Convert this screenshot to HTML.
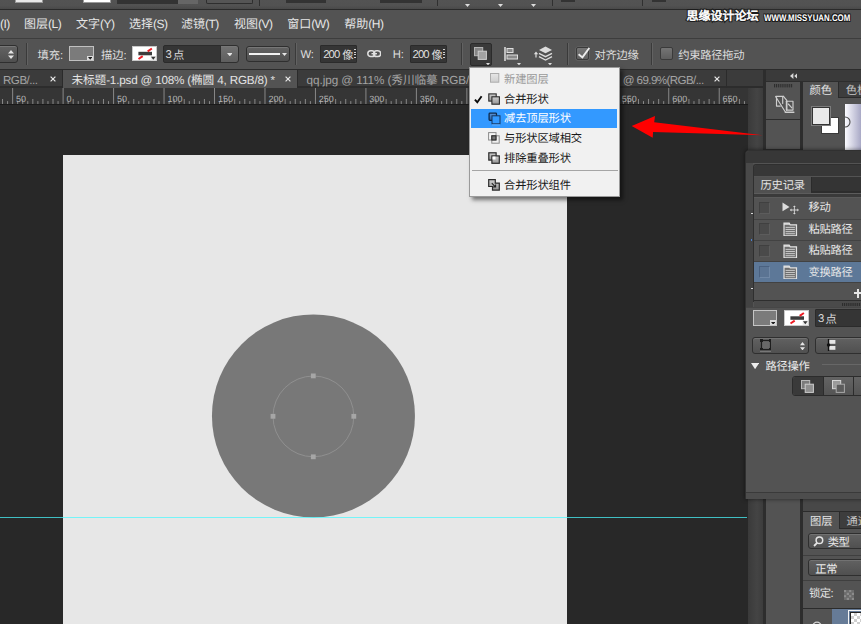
<!DOCTYPE html>
<html lang="zh"><head><meta charset="utf-8"><title>Photoshop</title>
<style>
html,body{margin:0;padding:0}
body{width:861px;height:624px;overflow:hidden;position:relative;background:#282828;font-family:"Liberation Sans","Noto Sans CJK SC",sans-serif;font-size:11.3px;color:#dcdcdc;text-rendering:geometricPrecision;-webkit-font-smoothing:antialiased}
.a{position:absolute;box-sizing:border-box}
.t{position:absolute;white-space:nowrap}
.k{font-family:"Liberation Sans","Noto Sans CJK SC",sans-serif}
.wmo .k{-webkit-text-stroke:2.7px #1c1c1c;paint-order:stroke fill}
.wmi .k{-webkit-text-stroke:0.6px #ffffff}
</style></head>
<body>
<div class="a" style="left:0px;top:105px;width:748px;height:519px;background:#282828;"></div>
<div class="a" style="left:62.7px;top:154.9px;width:504.5px;height:470px;background:#e7e7e7;"></div>
<svg class="a" style="left:200px;top:300px;" width="230" height="230" viewBox="0 0 230 230"><circle cx="113.45" cy="115.9" r="101.5" fill="#787878"/><circle cx="113.4" cy="116.4" r="40.4" fill="none" stroke="#949494" stroke-width="0.85"/><g fill="#a6a6a6"><rect x="110.9" y="73.5" width="4.8" height="4.8"/><rect x="110.9" y="154.4" width="4.8" height="4.8"/><rect x="70.6" y="113.9" width="4.8" height="4.8"/><rect x="151.4" y="113.9" width="4.8" height="4.8"/></g></svg>
<div class="a" style="left:0px;top:516.5px;width:747.3px;height:1.5px;background:rgba(74,250,255,.72);"></div>
<div class="a" style="left:0px;top:0px;width:861px;height:10px;background:#525252;background:linear-gradient(#535353 0,#525252 55%,#474747 100%);"></div>
<div class="a" style="left:15px;top:0px;width:28px;height:3px;background:#e9e9e9;border:1px solid #999;border-top:0"></div>
<div class="a" style="left:83px;top:0px;width:28px;height:3px;background:#ffffff;border:1px solid #999;border-top:0"></div>
<div class="a" style="left:117px;top:0px;width:81px;height:3.5px;background:#333;"></div>
<div class="a" style="left:178px;top:0px;width:20px;height:3.5px;background:#666;"></div>
<div class="a" style="left:205.5px;top:0px;width:47px;height:3.5px;background:#555;border:1px solid #2e2e2e;border-top:0;border-radius:0 0 2px 2px"></div>
<div class="a" style="left:259px;top:0px;width:1.2px;height:5.8px;background:#303030;"></div>
<div class="a" style="left:286px;top:0px;width:40px;height:3px;background:#333;"></div>
<div class="a" style="left:380px;top:0px;width:42px;height:3px;background:#333;"></div>
<div class="a" style="left:437px;top:0px;width:1.2px;height:5.8px;background:#303030;"></div>
<svg class="a" style="left:464.5px;top:4px;" width="5" height="3" viewBox="0 0 5 3"><path d="M0 0h5L2.5 3z" fill="#ddd"/></svg>
<svg class="a" style="left:497.5px;top:4px;" width="5" height="3" viewBox="0 0 5 3"><path d="M0 0h5L2.5 3z" fill="#ddd"/></svg>
<svg class="a" style="left:530.5px;top:4px;" width="5" height="3" viewBox="0 0 5 3"><path d="M0 0h5L2.5 3z" fill="#ddd"/></svg>
<div class="a" style="left:552px;top:0px;width:1.2px;height:5.8px;background:#303030;"></div>
<div class="a" style="left:561px;top:0px;width:14px;height:1.5px;background:#333;"></div>
<div class="a" style="left:642px;top:0px;width:1.2px;height:5.8px;background:#303030;"></div>
<div class="a" style="left:652px;top:0px;width:14px;height:1.5px;background:#333;"></div>
<div class="a" style="left:0px;top:8.9px;width:861px;height:1.5px;background:#2a2a2a;"></div>
<div class="a" style="left:0px;top:10.4px;width:861px;height:27.6px;background:#535353;"></div>
<div class="t " style="left:0px;top:16.44px;font-size:12px;line-height:16px;color:#e6e6e6;"><span style="letter-spacing:-0.5px;">(I)</span></div>
<div class="t " style="left:24px;top:16.44px;font-size:12px;line-height:16px;color:#e6e6e6;"><span class="k">图层</span><span style="letter-spacing:-0.5px;">(L)</span></div>
<div class="t " style="left:76px;top:16.44px;font-size:12px;line-height:16px;color:#e6e6e6;"><span class="k">文字</span><span style="letter-spacing:-0.5px;">(Y)</span></div>
<div class="t " style="left:129px;top:16.44px;font-size:12px;line-height:16px;color:#e6e6e6;"><span class="k">选择</span><span style="letter-spacing:-0.5px;">(S)</span></div>
<div class="t " style="left:181px;top:16.44px;font-size:12px;line-height:16px;color:#e6e6e6;"><span class="k">滤镜</span><span style="letter-spacing:-0.5px;">(T)</span></div>
<div class="t " style="left:234px;top:16.44px;font-size:12px;line-height:16px;color:#e6e6e6;"><span class="k">视图</span><span style="letter-spacing:-0.5px;">(V)</span></div>
<div class="t " style="left:287.3px;top:16.44px;font-size:12px;line-height:16px;color:#e6e6e6;"><span class="k">窗口</span><span style="letter-spacing:-0.5px;">(W)</span></div>
<div class="t " style="left:344.3px;top:16.44px;font-size:12px;line-height:16px;color:#e6e6e6;"><span class="k">帮助</span><span style="letter-spacing:-0.5px;">(H)</span></div>
<div class="t wmo" style="left:686.6px;top:8.34px;font-size:12px;line-height:16px;color:#1c1c1c;"><span class="k">思缘设计论坛</span></div>
<div class="t wmi" style="left:686.6px;top:8.34px;font-size:12px;line-height:16px;color:#ffffff;"><span class="k">思缘设计论坛</span></div>
<div class="t " style="left:764.3px;top:11.15px;font-size:9.6px;line-height:16px;color:#fff;font-weight:bold;text-shadow:1px 0 0 #1c1c1c,-1px 0 0 #1c1c1c,0 1px 0 #1c1c1c,0 -1px 0 #1c1c1c,1px 1px 0 #1c1c1c,-1px -1px 0 #1c1c1c,1px -1px 0 #1c1c1c,-1px 1px 0 #1c1c1c;transform-origin:0 50%;transform:scaleX(0.822);">WWW.MISSYUAN.COM</div>
<div class="a" style="left:0px;top:37.7px;width:861px;height:1.4px;background:#3d3d3d;"></div>
<div class="a" style="left:0px;top:39.1px;width:861px;height:29.9px;background:#535353;"></div>
<div class="a" style="left:0px;top:69px;width:861px;height:1px;background:#2b2b2b;"></div>
<div class="a" style="left:-4px;top:45px;width:21.5px;height:17.5px;background:linear-gradient(#636363,#4f4f4f);border:1px solid #2f2f2f;border-radius:3px;box-shadow:inset 0 1px 0 #777;"></div>
<svg class="a" style="left:7.5px;top:49.5px;" width="6" height="9" viewBox="0 0 6 9"><path d="M0 3.5L3 0l3 3.5zM0 5.5h6L3 9z" fill="#e6e6e6"/></svg>
<div class="a" style="left:26px;top:43px;width:1px;height:22px;background:#3a3a3a;"></div><div class="a" style="left:27px;top:43px;width:1px;height:22px;background:#626262;"></div>
<div class="t " style="left:37.5px;top:47.98px;font-size:11.3px;line-height:16px;color:#dedede;"><span class="k">填充</span>:</div>
<div class="a" style="left:68.7px;top:46px;width:24.9px;height:15.2px;background:#7b7b7b;border:1.2px solid #c0c0c0;"></div>
<div class="a" style="left:87px;top:56.3px;width:5.6px;height:4.2px;background:#dcdcdc;"></div>
<svg class="a" style="left:87.6px;top:57.3px;" width="4.4" height="2.7" viewBox="0 0 4.4 2.7"><path d="M0 0h4.4L2.2 2.7z" fill="#1e1e1e"/></svg>
<div class="t " style="left:101px;top:47.98px;font-size:11.3px;line-height:16px;color:#dedede;"><span class="k">描边</span>:</div>
<div class="a" style="left:131.6px;top:46px;width:25.1px;height:15.4px;background:#ffffff;border:1px solid #c8c8c8;"></div><svg class="a" style="left:131.6px;top:46px;" width="24.8" height="15.4" viewBox="0 0 24.8 15"><rect x="6.4" y="5.6" width="13.6" height="3.5" fill="#3c3c3c"/><path d="M15.7 5.2L19.9 2.3" stroke="#ee1c24" stroke-width="2"/><path d="M6.5 12.8L10.7 10" stroke="#ee1c24" stroke-width="2"/><rect x="18.6" y="9.8" width="5.4" height="4.4" fill="#e8e8e8"/><path d="M19 10.6h4.6L21.3 13.6z" fill="#333"/></svg>
<div class="a" style="left:162.5px;top:45px;width:58px;height:17.5px;background:#353535;border:1px solid #2b2b2b;border-radius:1px;border-radius:2px 0 0 2px;"></div>
<div class="t " style="left:165.6px;top:47.98px;font-size:11.3px;line-height:16px;color:#dedede;"><span style="letter-spacing:-1px;position:relative;top:-0.9px;">3 </span><span class="k">点</span></div>
<div class="a" style="left:220px;top:45px;width:18.5px;height:17.5px;background:linear-gradient(#636363,#4f4f4f);border:1px solid #2f2f2f;border-radius:3px;box-shadow:inset 0 1px 0 #777;border-radius:0 3px 3px 0;background:linear-gradient(#727272,#5e5e5e);"></div>
<svg class="a" style="left:226.5px;top:52.5px;" width="5.6" height="3.4" viewBox="0 0 5.6 3.4"><path d="M0 0h5.6L2.8 3.4z" fill="#e6e6e6"/></svg>
<div class="a" style="left:245.5px;top:45.5px;width:44px;height:16px;background:linear-gradient(#636363,#4f4f4f);border:1px solid #2f2f2f;border-radius:3px;box-shadow:inset 0 1px 0 #777;"></div>
<div class="a" style="left:249px;top:53.4px;width:31px;height:1.6px;background:#f2f2f2;"></div>
<svg class="a" style="left:281.5px;top:52.8px;" width="5" height="3" viewBox="0 0 5 3"><path d="M0 0h5L2.5 3z" fill="#e6e6e6"/></svg>
<div class="a" style="left:294.5px;top:43px;width:1px;height:22px;background:#3a3a3a;"></div><div class="a" style="left:295.5px;top:43px;width:1px;height:22px;background:#626262;"></div>
<div class="t " style="left:300.4px;top:46.88px;font-size:11.3px;line-height:16px;color:#dedede;">W:</div>
<div class="a" style="left:320px;top:45px;width:37px;height:17.5px;background:#353535;border:1px solid #2b2b2b;border-radius:1px;"></div>
<div class="t " style="left:323.2px;top:46.98px;font-size:11.3px;line-height:16px;color:#dedede;"><span style="letter-spacing:-0.9px;">200</span></div>
<div class="t " style="left:342.3px;top:47.98px;font-size:11.3px;line-height:16px;color:#dedede;"><span class="k">像</span></div>
<div class="a" style="left:353.7px;top:49px;width:2px;height:9px;background:repeating-linear-gradient(#cfcfcf 0 1.2px,#333 1.2px 2.6px);"></div>
<svg class="a" style="left:366.5px;top:50.3px;" width="14.5" height="7.4" viewBox="0 0 14.5 7.4"><g fill="none" stroke="#e0e0e0" stroke-width="1.5"><rect x="0.8" y="0.8" width="7" height="5.8" rx="2.9"/><rect x="6.7" y="0.8" width="7" height="5.8" rx="2.9"/></g><path d="M4.5 3.7h5.5" stroke="#e0e0e0" stroke-width="1.4"/></svg>
<div class="t " style="left:392.7px;top:46.88px;font-size:11.3px;line-height:16px;color:#dedede;">H:</div>
<div class="a" style="left:409.5px;top:45px;width:37px;height:17.5px;background:#353535;border:1px solid #2b2b2b;border-radius:1px;"></div>
<div class="t " style="left:412.5px;top:46.98px;font-size:11.3px;line-height:16px;color:#dedede;"><span style="letter-spacing:-0.9px;">200</span></div>
<div class="t " style="left:431.6px;top:47.98px;font-size:11.3px;line-height:16px;color:#dedede;"><span class="k">像</span></div>
<div class="a" style="left:443.2px;top:49px;width:2px;height:9px;background:repeating-linear-gradient(#cfcfcf 0 1.2px,#333 1.2px 2.6px);"></div>
<div class="a" style="left:460.5px;top:43px;width:1px;height:22px;background:#3a3a3a;"></div><div class="a" style="left:461.5px;top:43px;width:1px;height:22px;background:#626262;"></div>
<div class="a" style="left:470px;top:42.6px;width:21.8px;height:23.2px;background:#3a3a3a;border:1px solid #2b2b2b;border-radius:2px;"></div>
<svg class="a" style="left:474px;top:47px;" width="13" height="13" viewBox="0 0 13 13"><rect x="0.5" y="0.5" width="8.2" height="8.2" fill="#858585" stroke="#b4b4b4" stroke-width="1"/><rect x="4.2" y="4.2" width="8.2" height="8.2" fill="#a2a2a2" stroke="#cdcdcd" stroke-width="1"/></svg>
<svg class="a" style="left:486.3px;top:62.7px;" width="4" height="2.4" viewBox="0 0 4 2.4"><path d="M0 0h4L2 2.4z" fill="#ddd"/></svg>
<svg class="a" style="left:504px;top:47px;" width="15" height="14" viewBox="0 0 15 14"><path d="M1 0v14" stroke="#e0e0e0" stroke-width="1.5"/><rect x="3" y="1.5" width="6" height="4" fill="#8a8a8a" stroke="#e0e0e0" stroke-width="1"/><rect x="3" y="8" width="10.5" height="4" fill="#8a8a8a" stroke="#e0e0e0" stroke-width="1"/></svg>
<svg class="a" style="left:517.3px;top:62.7px;" width="4" height="2.4" viewBox="0 0 4 2.4"><path d="M0 0h4L2 2.4z" fill="#ddd"/></svg>
<svg class="a" style="left:532.5px;top:45.5px;" width="20" height="16" viewBox="0 0 20 16"><path d="M3 7.6v4" fill="none" stroke="#e0e0e0" stroke-width="1.2"/><path d="M0.8 8.2L3 5.4l2.2 2.8z" fill="#e0e0e0"/><path d="M12.5 0.5l6.5 3.4-6.5 3.4L6 3.9z" fill="#ddd"/><path d="M6 7.3l6.5 3.4L19 7.3M6 10.6l6.5 3.4 6.5-3.4" fill="none" stroke="#ddd" stroke-width="1.3"/></svg>
<svg class="a" style="left:548.2px;top:62.7px;" width="4" height="2.4" viewBox="0 0 4 2.4"><path d="M0 0h4L2 2.4z" fill="#ddd"/></svg>
<div class="a" style="left:567px;top:43px;width:1px;height:22px;background:#3a3a3a;"></div><div class="a" style="left:568px;top:43px;width:1px;height:22px;background:#626262;"></div>
<div class="a" style="left:576.3px;top:47px;width:13.2px;height:13.2px;background:#6c6c6c;border:1px solid #3a3a3a;border-radius:2px;background:linear-gradient(#767676,#606060);box-shadow:0 0 0 0.6px #6a6a6a;"></div>
<svg class="a" style="left:577px;top:45.5px;" width="14" height="14" viewBox="0 0 14 14"><path d="M1.6 8.2L5.4 11.4 12.3 2" fill="none" stroke="#ececec" stroke-width="1.9"/></svg>
<div class="t " style="left:594.4px;top:47.98px;font-size:11.3px;line-height:16px;color:#dedede;"><span class="k" style="letter-spacing:-0.3px;">对齐边缘</span></div>
<div class="a" style="left:650.5px;top:43px;width:1px;height:22px;background:#3a3a3a;"></div><div class="a" style="left:651.5px;top:43px;width:1px;height:22px;background:#626262;"></div>
<div class="a" style="left:660px;top:47px;width:13px;height:13.2px;background:#686868;border:1px solid #3a3a3a;border-radius:2px;background:linear-gradient(#747474,#5e5e5e);"></div>
<div class="t " style="left:678.2px;top:47.98px;font-size:11.3px;line-height:16px;color:#dedede;"><span class="k" style="letter-spacing:-0.26px;">约束路径拖动</span></div>
<div class="a" style="left:0px;top:70px;width:762.5px;height:18.3px;background:#3b3b3b;"></div>
<div class="a" style="left:63px;top:70px;width:234px;height:18.3px;background:#535353;"></div>
<div class="a" style="left:0px;top:86.3px;width:63px;height:1.7px;background:#2c2c2c;"></div>
<div class="a" style="left:297px;top:86.3px;width:465.5px;height:1.7px;background:#2c2c2c;"></div>
<div class="a" style="left:62px;top:70px;width:1px;height:18.3px;background:#2b2b2b;"></div>
<div class="a" style="left:297px;top:70px;width:1px;height:18.3px;background:#2b2b2b;"></div>
<div class="t " style="left:3px;top:72.99px;font-size:11.6px;line-height:16px;color:#a4a4a4;"><span style="letter-spacing:-0.5px;">RGB/...</span></div>
<svg class="a" style="left:49.8px;top:76.4px;" width="6" height="6" viewBox="0 0 6 6"><path d="M0.6 0.6L5.4 5.4M5.4 0.6L0.6 5.4" stroke="#e8e8e8" stroke-width="1.2"/></svg>
<div class="t " style="left:71.4px;top:73.03px;font-size:11.7px;line-height:16px;color:#e4e4e4;"><span class="k" style="letter-spacing:-0.1px;">未标题</span><span style="letter-spacing:-0.2px;">-1.psd @ 108% (</span><span class="k" style="letter-spacing:-0.1px;">椭圆</span><span style="letter-spacing:-0.2px;"> 4, RGB/8) *</span></div>
<svg class="a" style="left:285px;top:76.4px;" width="6" height="6" viewBox="0 0 6 6"><path d="M0.6 0.6L5.4 5.4M5.4 0.6L0.6 5.4" stroke="#e8e8e8" stroke-width="1.2"/></svg>
<div class="t " style="left:306.6px;top:73.03px;font-size:11.7px;line-height:16px;color:#a4a4a4;"><span style="letter-spacing:-0.05px;">qq.jpg @ 111% (</span><span class="k" style="letter-spacing:-0.1px;">秀川临摹</span><span style="letter-spacing:-0.05px;"> RGB/</span></div>
<div class="t " style="left:622.8px;top:72.99px;font-size:11.6px;line-height:16px;color:#a4a4a4;"><span style="letter-spacing:-0.6px;">@ 69.9%(RGB/...</span></div>
<svg class="a" style="left:713.8px;top:76.4px;" width="6" height="6" viewBox="0 0 6 6"><path d="M0.6 0.6L5.4 5.4M5.4 0.6L0.6 5.4" stroke="#e8e8e8" stroke-width="1.2"/></svg>
<div class="a" style="left:726px;top:70px;width:1px;height:18.3px;background:#2b2b2b;"></div>
<div class="a" style="left:0px;top:88px;width:748px;height:16.2px;background:#353535;"></div>
<div class="a" style="left:0px;top:103.7px;width:748px;height:1.7px;background:#1a1a1a;"></div>
<svg class="a" style="left:0px;top:88px;" width="748" height="16" viewBox="0 0 748 16"><rect x="-38.34" y="0" width="1" height="16" fill="#888888"/><rect x="-33.29" y="13.1" width="1" height="2.9" fill="#888888"/><rect x="-28.25" y="11" width="1" height="5" fill="#888888"/><rect x="-23.20" y="13.1" width="1" height="2.9" fill="#888888"/><rect x="-18.15" y="11" width="1" height="5" fill="#888888"/><rect x="-13.10" y="13.1" width="1" height="2.9" fill="#888888"/><rect x="-8.06" y="11" width="1" height="5" fill="#888888"/><rect x="-3.01" y="13.1" width="1" height="2.9" fill="#888888"/><rect x="2.04" y="11" width="1" height="5" fill="#888888"/><rect x="7.08" y="13.1" width="1" height="2.9" fill="#888888"/><rect x="12.13" y="0" width="1" height="16" fill="#888888"/><rect x="17.18" y="13.1" width="1" height="2.9" fill="#888888"/><rect x="22.22" y="11" width="1" height="5" fill="#888888"/><rect x="27.27" y="13.1" width="1" height="2.9" fill="#888888"/><rect x="32.32" y="11" width="1" height="5" fill="#888888"/><rect x="37.37" y="13.1" width="1" height="2.9" fill="#888888"/><rect x="42.41" y="11" width="1" height="5" fill="#888888"/><rect x="47.46" y="13.1" width="1" height="2.9" fill="#888888"/><rect x="52.51" y="11" width="1" height="5" fill="#888888"/><rect x="57.55" y="13.1" width="1" height="2.9" fill="#888888"/><rect x="62.60" y="0" width="1" height="16" fill="#888888"/><rect x="67.65" y="13.1" width="1" height="2.9" fill="#888888"/><rect x="72.69" y="11" width="1" height="5" fill="#888888"/><rect x="77.74" y="13.1" width="1" height="2.9" fill="#888888"/><rect x="82.79" y="11" width="1" height="5" fill="#888888"/><rect x="87.84" y="13.1" width="1" height="2.9" fill="#888888"/><rect x="92.88" y="11" width="1" height="5" fill="#888888"/><rect x="97.93" y="13.1" width="1" height="2.9" fill="#888888"/><rect x="102.98" y="11" width="1" height="5" fill="#888888"/><rect x="108.02" y="13.1" width="1" height="2.9" fill="#888888"/><rect x="113.07" y="0" width="1" height="16" fill="#888888"/><rect x="118.12" y="13.1" width="1" height="2.9" fill="#888888"/><rect x="123.16" y="11" width="1" height="5" fill="#888888"/><rect x="128.21" y="13.1" width="1" height="2.9" fill="#888888"/><rect x="133.26" y="11" width="1" height="5" fill="#888888"/><rect x="138.31" y="13.1" width="1" height="2.9" fill="#888888"/><rect x="143.35" y="11" width="1" height="5" fill="#888888"/><rect x="148.40" y="13.1" width="1" height="2.9" fill="#888888"/><rect x="153.45" y="11" width="1" height="5" fill="#888888"/><rect x="158.49" y="13.1" width="1" height="2.9" fill="#888888"/><rect x="163.54" y="0" width="1" height="16" fill="#888888"/><rect x="168.59" y="13.1" width="1" height="2.9" fill="#888888"/><rect x="173.63" y="11" width="1" height="5" fill="#888888"/><rect x="178.68" y="13.1" width="1" height="2.9" fill="#888888"/><rect x="183.73" y="11" width="1" height="5" fill="#888888"/><rect x="188.77" y="13.1" width="1" height="2.9" fill="#888888"/><rect x="193.82" y="11" width="1" height="5" fill="#888888"/><rect x="198.87" y="13.1" width="1" height="2.9" fill="#888888"/><rect x="203.92" y="11" width="1" height="5" fill="#888888"/><rect x="208.96" y="13.1" width="1" height="2.9" fill="#888888"/><rect x="214.01" y="0" width="1" height="16" fill="#888888"/><rect x="219.06" y="13.1" width="1" height="2.9" fill="#888888"/><rect x="224.10" y="11" width="1" height="5" fill="#888888"/><rect x="229.15" y="13.1" width="1" height="2.9" fill="#888888"/><rect x="234.20" y="11" width="1" height="5" fill="#888888"/><rect x="239.25" y="13.1" width="1" height="2.9" fill="#888888"/><rect x="244.29" y="11" width="1" height="5" fill="#888888"/><rect x="249.34" y="13.1" width="1" height="2.9" fill="#888888"/><rect x="254.39" y="11" width="1" height="5" fill="#888888"/><rect x="259.43" y="13.1" width="1" height="2.9" fill="#888888"/><rect x="264.48" y="0" width="1" height="16" fill="#888888"/><rect x="269.53" y="13.1" width="1" height="2.9" fill="#888888"/><rect x="274.57" y="11" width="1" height="5" fill="#888888"/><rect x="279.62" y="13.1" width="1" height="2.9" fill="#888888"/><rect x="284.67" y="11" width="1" height="5" fill="#888888"/><rect x="289.72" y="13.1" width="1" height="2.9" fill="#888888"/><rect x="294.76" y="11" width="1" height="5" fill="#888888"/><rect x="299.81" y="13.1" width="1" height="2.9" fill="#888888"/><rect x="304.86" y="11" width="1" height="5" fill="#888888"/><rect x="309.90" y="13.1" width="1" height="2.9" fill="#888888"/><rect x="314.95" y="0" width="1" height="16" fill="#888888"/><rect x="320.00" y="13.1" width="1" height="2.9" fill="#888888"/><rect x="325.04" y="11" width="1" height="5" fill="#888888"/><rect x="330.09" y="13.1" width="1" height="2.9" fill="#888888"/><rect x="335.14" y="11" width="1" height="5" fill="#888888"/><rect x="340.19" y="13.1" width="1" height="2.9" fill="#888888"/><rect x="345.23" y="11" width="1" height="5" fill="#888888"/><rect x="350.28" y="13.1" width="1" height="2.9" fill="#888888"/><rect x="355.33" y="11" width="1" height="5" fill="#888888"/><rect x="360.37" y="13.1" width="1" height="2.9" fill="#888888"/><rect x="365.42" y="0" width="1" height="16" fill="#888888"/><rect x="370.47" y="13.1" width="1" height="2.9" fill="#888888"/><rect x="375.51" y="11" width="1" height="5" fill="#888888"/><rect x="380.56" y="13.1" width="1" height="2.9" fill="#888888"/><rect x="385.61" y="11" width="1" height="5" fill="#888888"/><rect x="390.66" y="13.1" width="1" height="2.9" fill="#888888"/><rect x="395.70" y="11" width="1" height="5" fill="#888888"/><rect x="400.75" y="13.1" width="1" height="2.9" fill="#888888"/><rect x="405.80" y="11" width="1" height="5" fill="#888888"/><rect x="410.84" y="13.1" width="1" height="2.9" fill="#888888"/><rect x="415.89" y="0" width="1" height="16" fill="#888888"/><rect x="420.94" y="13.1" width="1" height="2.9" fill="#888888"/><rect x="425.98" y="11" width="1" height="5" fill="#888888"/><rect x="431.03" y="13.1" width="1" height="2.9" fill="#888888"/><rect x="436.08" y="11" width="1" height="5" fill="#888888"/><rect x="441.12" y="13.1" width="1" height="2.9" fill="#888888"/><rect x="446.17" y="11" width="1" height="5" fill="#888888"/><rect x="451.22" y="13.1" width="1" height="2.9" fill="#888888"/><rect x="456.27" y="11" width="1" height="5" fill="#888888"/><rect x="461.31" y="13.1" width="1" height="2.9" fill="#888888"/><rect x="466.36" y="0" width="1" height="16" fill="#888888"/><rect x="471.41" y="13.1" width="1" height="2.9" fill="#888888"/><rect x="476.45" y="11" width="1" height="5" fill="#888888"/><rect x="481.50" y="13.1" width="1" height="2.9" fill="#888888"/><rect x="486.55" y="11" width="1" height="5" fill="#888888"/><rect x="491.60" y="13.1" width="1" height="2.9" fill="#888888"/><rect x="496.64" y="11" width="1" height="5" fill="#888888"/><rect x="501.69" y="13.1" width="1" height="2.9" fill="#888888"/><rect x="506.74" y="11" width="1" height="5" fill="#888888"/><rect x="511.78" y="13.1" width="1" height="2.9" fill="#888888"/><rect x="516.83" y="0" width="1" height="16" fill="#888888"/><rect x="521.88" y="13.1" width="1" height="2.9" fill="#888888"/><rect x="526.92" y="11" width="1" height="5" fill="#888888"/><rect x="531.97" y="13.1" width="1" height="2.9" fill="#888888"/><rect x="537.02" y="11" width="1" height="5" fill="#888888"/><rect x="542.07" y="13.1" width="1" height="2.9" fill="#888888"/><rect x="547.11" y="11" width="1" height="5" fill="#888888"/><rect x="552.16" y="13.1" width="1" height="2.9" fill="#888888"/><rect x="557.21" y="11" width="1" height="5" fill="#888888"/><rect x="562.25" y="13.1" width="1" height="2.9" fill="#888888"/><rect x="567.30" y="0" width="1" height="16" fill="#888888"/><rect x="572.35" y="13.1" width="1" height="2.9" fill="#888888"/><rect x="577.39" y="11" width="1" height="5" fill="#888888"/><rect x="582.44" y="13.1" width="1" height="2.9" fill="#888888"/><rect x="587.49" y="11" width="1" height="5" fill="#888888"/><rect x="592.53" y="13.1" width="1" height="2.9" fill="#888888"/><rect x="597.58" y="11" width="1" height="5" fill="#888888"/><rect x="602.63" y="13.1" width="1" height="2.9" fill="#888888"/><rect x="607.68" y="11" width="1" height="5" fill="#888888"/><rect x="612.72" y="13.1" width="1" height="2.9" fill="#888888"/><rect x="617.77" y="0" width="1" height="16" fill="#888888"/><rect x="622.82" y="13.1" width="1" height="2.9" fill="#888888"/><rect x="627.86" y="11" width="1" height="5" fill="#888888"/><rect x="632.91" y="13.1" width="1" height="2.9" fill="#888888"/><rect x="637.96" y="11" width="1" height="5" fill="#888888"/><rect x="643.00" y="13.1" width="1" height="2.9" fill="#888888"/><rect x="648.05" y="11" width="1" height="5" fill="#888888"/><rect x="653.10" y="13.1" width="1" height="2.9" fill="#888888"/><rect x="658.15" y="11" width="1" height="5" fill="#888888"/><rect x="663.19" y="13.1" width="1" height="2.9" fill="#888888"/><rect x="668.24" y="0" width="1" height="16" fill="#888888"/><rect x="673.29" y="13.1" width="1" height="2.9" fill="#888888"/><rect x="678.33" y="11" width="1" height="5" fill="#888888"/><rect x="683.38" y="13.1" width="1" height="2.9" fill="#888888"/><rect x="688.43" y="11" width="1" height="5" fill="#888888"/><rect x="693.48" y="13.1" width="1" height="2.9" fill="#888888"/><rect x="698.52" y="11" width="1" height="5" fill="#888888"/><rect x="703.57" y="13.1" width="1" height="2.9" fill="#888888"/><rect x="708.62" y="11" width="1" height="5" fill="#888888"/><rect x="713.66" y="13.1" width="1" height="2.9" fill="#888888"/><rect x="718.71" y="0" width="1" height="16" fill="#888888"/><rect x="723.76" y="13.1" width="1" height="2.9" fill="#888888"/><rect x="728.80" y="11" width="1" height="5" fill="#888888"/><rect x="733.85" y="13.1" width="1" height="2.9" fill="#888888"/><rect x="738.90" y="11" width="1" height="5" fill="#888888"/><rect x="743.95" y="13.1" width="1" height="2.9" fill="#888888"/><rect x="748.99" y="11" width="1" height="5" fill="#888888"/><rect x="754.04" y="13.1" width="1" height="2.9" fill="#888888"/><rect x="759.09" y="11" width="1" height="5" fill="#888888"/><rect x="764.13" y="13.1" width="1" height="2.9" fill="#888888"/></svg>
<div class="t " style="left:16.03px;top:90.53px;font-size:9px;line-height:16px;color:#b4b4b4;">50</div>
<div class="t " style="left:66.5px;top:90.53px;font-size:9px;line-height:16px;color:#b4b4b4;">0</div>
<div class="t " style="left:116.97px;top:90.53px;font-size:9px;line-height:16px;color:#b4b4b4;">50</div>
<div class="t " style="left:167.44px;top:90.53px;font-size:9px;line-height:16px;color:#b4b4b4;">100</div>
<div class="t " style="left:217.91px;top:90.53px;font-size:9px;line-height:16px;color:#b4b4b4;">150</div>
<div class="t " style="left:268.38px;top:90.53px;font-size:9px;line-height:16px;color:#b4b4b4;">200</div>
<div class="t " style="left:318.85px;top:90.53px;font-size:9px;line-height:16px;color:#b4b4b4;">250</div>
<div class="t " style="left:369.32px;top:90.53px;font-size:9px;line-height:16px;color:#b4b4b4;">300</div>
<div class="t " style="left:419.79px;top:90.53px;font-size:9px;line-height:16px;color:#b4b4b4;">350</div>
<div class="t " style="left:470.26px;top:90.53px;font-size:9px;line-height:16px;color:#b4b4b4;">400</div>
<div class="t " style="left:520.73px;top:90.53px;font-size:9px;line-height:16px;color:#b4b4b4;">450</div>
<div class="t " style="left:571.2px;top:90.53px;font-size:9px;line-height:16px;color:#b4b4b4;">500</div>
<div class="t " style="left:621.67px;top:90.53px;font-size:9px;line-height:16px;color:#b4b4b4;">550</div>
<div class="t " style="left:672.14px;top:90.53px;font-size:9px;line-height:16px;color:#b4b4b4;">600</div>
<div class="t " style="left:722.61px;top:90.53px;font-size:9px;line-height:16px;color:#b4b4b4;">650</div>
<div class="a" style="left:748px;top:88.3px;width:14.5px;height:536px;background:#3d3d3d;background:linear-gradient(90deg,#3a3a3a,#444 60%,#3c3c3c);"></div>
<div class="a" style="left:762.5px;top:70px;width:3.3px;height:554px;background:#2d2d2d;"></div>
<div class="a" style="left:765.8px;top:70px;width:96px;height:554px;background:#2d2d2d;"></div>
<div class="a" style="left:765.8px;top:70px;width:96px;height:11px;background:#3a3a3a;"></div>
<svg class="a" style="left:789.7px;top:72.7px;" width="7.6" height="6" viewBox="0 0 7.6 6"><path d="M3.4 0v6L0 3zM7.6 0v6L4.2 3z" fill="#d8d8d8"/></svg>
<div class="a" style="left:765.8px;top:82px;width:34.5px;height:36.7px;background:#535353;"></div>
<div class="a" style="left:765.8px;top:120px;width:34.5px;height:29px;background:#535353;"></div>
<svg class="a" style="left:774px;top:84.4px;" width="19" height="3.4" viewBox="0 0 19 3.4"><rect x="0" y="0" width="1.05" height="3.4" fill="#2e2e2e"/><rect x="1.9" y="0" width="1.05" height="3.4" fill="#2e2e2e"/><rect x="3.8" y="0" width="1.05" height="3.4" fill="#2e2e2e"/><rect x="5.7" y="0" width="1.05" height="3.4" fill="#2e2e2e"/><rect x="7.6" y="0" width="1.05" height="3.4" fill="#2e2e2e"/><rect x="9.5" y="0" width="1.05" height="3.4" fill="#2e2e2e"/><rect x="11.4" y="0" width="1.05" height="3.4" fill="#2e2e2e"/><rect x="13.3" y="0" width="1.05" height="3.4" fill="#2e2e2e"/><rect x="15.2" y="0" width="1.05" height="3.4" fill="#2e2e2e"/><rect x="17.1" y="0" width="1.05" height="3.4" fill="#2e2e2e"/></svg>
<svg class="a" style="left:775px;top:93.5px;" width="20" height="20" viewBox="0 0 20 20"><g fill="none" stroke="#cecece" stroke-width="1.15" stroke-linecap="round" stroke-linejoin="round"><path d="M0.9 2.4H8.6"/><path d="M1.5 3.6V12.1H5.3"/><path d="M7.7 3V9.5"/><path d="M0.7 2.8L10.4 18"/><path d="M8.4 2.4L11.8 6.4"/><path d="M11.6 7.2H18V16.1H11.6z"/><path d="M13.3 10L16.9 13.9"/><path d="M10.3 18.2H18.8" stroke-width="1.5"/><path d="M11.6 7.2V16.1" stroke-width="1.6"/></g></svg>
<div class="a" style="left:803px;top:82px;width:58px;height:68px;background:#535353;"></div>
<div class="a" style="left:838px;top:82px;width:23px;height:15px;background:#3d3d3d;"></div>
<div class="a" style="left:838px;top:82px;width:1px;height:15px;background:#2b2b2b;"></div>
<div class="a" style="left:838px;top:96.6px;width:23px;height:1px;background:#2b2b2b;"></div>
<div class="t " style="left:809.5px;top:82.78px;font-size:11.3px;line-height:16px;color:#e4e4e4;"><span class="k">颜色</span></div>
<div class="t " style="left:845.8px;top:82.78px;font-size:11.3px;line-height:16px;color:#c8c8c8;"><span class="k">色板</span></div>
<div class="a" style="left:821.2px;top:116.5px;width:17.6px;height:17.6px;background:#ffffff;border:1px solid #3a3a3a;"></div>
<div class="a" style="left:810.6px;top:106px;width:20px;height:19.7px;background:#e9e9e9;border:1px solid #7c7c7c;box-shadow:inset 0 0 0 1px #343434;"></div>
<div class="a" style="left:845px;top:104px;width:16px;height:46px;background:linear-gradient(90deg,#fbfbff,#a9a9c6);"></div>
<svg class="a" style="left:844.8px;top:116px;" width="8" height="12" viewBox="0 0 8 12"><path d="M0 1a5 5 0 0 1 0 10" fill="none" stroke="#484848" stroke-width="1.1"/></svg>
<div class="a" style="left:765.8px;top:499px;width:34.5px;height:125px;background:#535353;"></div>
<div class="a" style="left:803px;top:499px;width:58px;height:125px;background:#535353;"></div>
<div class="a" style="left:803px;top:499px;width:58px;height:11.5px;background:#484848;"></div>
<div class="a" style="left:803px;top:510.5px;width:58px;height:1.3px;background:#2b2b2b;"></div>
<div class="a" style="left:839px;top:511.8px;width:22px;height:17px;background:#3d3d3d;"></div>
<div class="a" style="left:839px;top:511.8px;width:1px;height:17px;background:#2b2b2b;"></div>
<div class="a" style="left:839px;top:528.2px;width:22px;height:1px;background:#2b2b2b;"></div>
<div class="t " style="left:810px;top:514.38px;font-size:11.3px;line-height:16px;color:#e4e4e4;"><span class="k">图层</span></div>
<div class="t " style="left:846.5px;top:514.38px;font-size:11.3px;line-height:16px;color:#c8c8c8;"><span class="k">通道</span></div>
<div class="a" style="left:807.5px;top:533px;width:60px;height:16.4px;background:linear-gradient(#616161,#505050);border:1px solid #2f2f2f;border-radius:3px;box-shadow:inset 0 1px 0 #727272;"></div>
<svg class="a" style="left:813.2px;top:536.2px;" width="11" height="11" viewBox="0 0 11 11"><circle cx="6.4" cy="4.3" r="3.3" fill="none" stroke="#e4e4e4" stroke-width="1.5"/><path d="M4.1 6.8L1 10" stroke="#e4e4e4" stroke-width="1.8"/></svg>
<div class="t " style="left:827.7px;top:535.48px;font-size:11.3px;line-height:16px;color:#ececec;"><span class="k" style="letter-spacing:-0.4px;">类型</span></div>
<div class="a" style="left:803px;top:554.6px;width:58px;height:1px;background:#3f3f3f;"></div>
<div class="a" style="left:807.5px;top:559.3px;width:60px;height:16.5px;background:linear-gradient(#616161,#505050);border:1px solid #2f2f2f;border-radius:3px;box-shadow:inset 0 1px 0 #727272;"></div>
<div class="t " style="left:815.3px;top:561.98px;font-size:11.3px;line-height:16px;color:#ececec;"><span class="k" style="letter-spacing:-0.4px;">正常</span></div>
<div class="a" style="left:803px;top:580px;width:58px;height:1px;background:#3f3f3f;"></div>
<div class="t " style="left:809px;top:586.18px;font-size:11.3px;line-height:16px;color:#e4e4e4;"><span class="k" style="letter-spacing:-0.5px;">锁定</span>:</div>
<svg class="a" style="left:844px;top:589.5px;" width="10.2" height="10.2" viewBox="0 0 10.2 10.2"><rect x="0" y="0" width="2.55" height="2.55" fill="#8c8c8c"/><rect x="0" y="2.55" width="2.55" height="2.55" fill="#6c6c6c"/><rect x="0" y="5.1" width="2.55" height="2.55" fill="#8c8c8c"/><rect x="0" y="7.65" width="2.55" height="2.55" fill="#6c6c6c"/><rect x="2.55" y="0" width="2.55" height="2.55" fill="#6c6c6c"/><rect x="2.55" y="2.55" width="2.55" height="2.55" fill="#8c8c8c"/><rect x="2.55" y="5.1" width="2.55" height="2.55" fill="#6c6c6c"/><rect x="2.55" y="7.65" width="2.55" height="2.55" fill="#8c8c8c"/><rect x="5.1" y="0" width="2.55" height="2.55" fill="#8c8c8c"/><rect x="5.1" y="2.55" width="2.55" height="2.55" fill="#6c6c6c"/><rect x="5.1" y="5.1" width="2.55" height="2.55" fill="#8c8c8c"/><rect x="5.1" y="7.65" width="2.55" height="2.55" fill="#6c6c6c"/><rect x="7.65" y="0" width="2.55" height="2.55" fill="#6c6c6c"/><rect x="7.65" y="2.55" width="2.55" height="2.55" fill="#8c8c8c"/><rect x="7.65" y="5.1" width="2.55" height="2.55" fill="#6c6c6c"/><rect x="7.65" y="7.65" width="2.55" height="2.55" fill="#8c8c8c"/></svg>
<div class="a" style="left:803px;top:607.7px;width:58px;height:1px;background:#2b2b2b;"></div>
<div class="a" style="left:832px;top:608.7px;width:29px;height:16px;background:#667b97;"></div>
<div class="a" style="left:847.6px;top:609.9px;width:14px;height:15px;border:1.4px solid #f4f4f4;"></div>
<div class="a" style="left:849.8px;top:612.2px;width:12px;height:12px;background:#fff;border:1px solid #222;"></div>
<svg class="a" style="left:850.8px;top:613.2px;" width="12" height="12" viewBox="0 0 12 12"><rect x="0" y="0" width="3" height="3" fill="#ffffff"/><rect x="0" y="3" width="3" height="3" fill="#cfcfcf"/><rect x="0" y="6" width="3" height="3" fill="#ffffff"/><rect x="0" y="9" width="3" height="3" fill="#cfcfcf"/><rect x="3" y="0" width="3" height="3" fill="#cfcfcf"/><rect x="3" y="3" width="3" height="3" fill="#ffffff"/><rect x="3" y="6" width="3" height="3" fill="#cfcfcf"/><rect x="3" y="9" width="3" height="3" fill="#ffffff"/><rect x="6" y="0" width="3" height="3" fill="#ffffff"/><rect x="6" y="3" width="3" height="3" fill="#cfcfcf"/><rect x="6" y="6" width="3" height="3" fill="#ffffff"/><rect x="6" y="9" width="3" height="3" fill="#cfcfcf"/><rect x="9" y="0" width="3" height="3" fill="#cfcfcf"/><rect x="9" y="3" width="3" height="3" fill="#ffffff"/><rect x="9" y="6" width="3" height="3" fill="#cfcfcf"/><rect x="9" y="9" width="3" height="3" fill="#ffffff"/></svg>
<svg class="a" style="left:812px;top:620.6px;" width="11" height="5" viewBox="0 0 11 5"><ellipse cx="5" cy="5.2" rx="4.2" ry="4" fill="none" stroke="#d4d4d4" stroke-width="1.2"/></svg>
<div class="a" style="left:745.4px;top:150.4px;width:120px;height:349px;background:#535353;border-radius:4px 0 0 0;box-shadow:0 0 4px rgba(0,0,0,.55);border:1px solid #303030;"></div>
<div class="a" style="left:746.4px;top:151.4px;width:115px;height:11.6px;background:#373737;border-radius:3px 0 0 0;"></div>
<div class="a" style="left:746.4px;top:163px;width:7px;height:47px;background:#494949;"></div>
<div class="a" style="left:746.4px;top:210px;width:7px;height:97px;background:#434343;"></div>
<div class="a" style="left:751.2px;top:212.6px;width:1.6px;height:1.6px;background:#d8d8d8;"></div>
<div class="a" style="left:751.2px;top:287.6px;width:1.6px;height:1.6px;background:#d8d8d8;"></div>
<div class="a" style="left:751px;top:238.6px;width:1.4px;height:2px;background:#4a7fd0;"></div>
<div class="a" style="left:753.4px;top:163.7px;width:108px;height:138px;background:#535353;border-left:1px solid #2f2f2f;border-top:1px solid #2f2f2f;border-radius:3px 0 0 0;"></div>
<div class="a" style="left:754.4px;top:164.7px;width:107px;height:11.8px;background:#373737;border-radius:2px 0 0 0;"></div>
<div class="a" style="left:754.4px;top:176.5px;width:107px;height:14.6px;background:#343434;"></div>
<div class="a" style="left:754.4px;top:176.5px;width:57px;height:16.4px;background:#505050;"></div>
<div class="a" style="left:754.4px;top:191.1px;width:107px;height:1.7px;background:#2d2d2d;"></div>
<div class="a" style="left:754.4px;top:176.5px;width:57px;height:16.4px;background:#505050;"></div>
<div class="a" style="left:754.4px;top:192.8px;width:107px;height:1px;background:#5c5c5c;"></div>
<div class="a" style="left:754.4px;top:193.8px;width:107px;height:3.2px;background:#3a3a3a;"></div>
<div class="a" style="left:811.4px;top:176.5px;width:1px;height:15px;background:#2b2b2b;"></div>
<div class="t " style="left:760.5px;top:177.78px;font-size:11.3px;line-height:16px;color:#e4e4e4;"><span class="k" style="letter-spacing:-0.2px;">历史记录</span></div>
<div class="a" style="left:754.4px;top:261.7px;width:107px;height:20.5px;background:#5d7898;"></div>
<div class="a" style="left:754.4px;top:197.1px;width:107px;height:1px;background:#5b5b5b;"></div>
<div class="a" style="left:758.8px;top:202px;width:11.6px;height:11.6px;background:#4a4a4a;border:1px solid #404040;border-right-color:#5c5c5c;border-bottom-color:#5c5c5c;"></div>
<div class="t " style="left:808.4px;top:200.48px;font-size:11.3px;line-height:16px;color:#e8e8e8;"><span class="k" style="letter-spacing:-0.3px;">移动</span></div>
<svg class="a" style="left:782px;top:201.5px;" width="18" height="13" viewBox="0 0 18 13"><path d="M0.5 0.5v8.8l7-4.4z" fill="#dcdcdc"/><path d="M12.4 4.5v7M8.9 8h7" stroke="#d8d8d8" stroke-width="0.9"/><path d="M12.4 3.4l1.4 1.7h-2.8zM12.4 12.6l1.4-1.7h-2.8zM7.8 8l1.7-1.4v2.8zM17 8l-1.7-1.4v2.8z" fill="#d8d8d8"/></svg>
<div class="a" style="left:754.4px;top:218.5px;width:107px;height:1px;background:#424242;"></div>
<div class="a" style="left:758.8px;top:223.4px;width:11.6px;height:11.6px;background:#4a4a4a;border:1px solid #404040;border-right-color:#5c5c5c;border-bottom-color:#5c5c5c;"></div>
<div class="t " style="left:808.4px;top:221.88px;font-size:11.3px;line-height:16px;color:#e8e8e8;"><span class="k" style="letter-spacing:-0.3px;">粘贴路径</span></div>
<svg class="a" style="left:783px;top:221.9px;" width="14.5" height="14.6" viewBox="0 0 14.5 14.6"><path d="M1 1.2h5.2l1 1.6h6.3v11H1z" fill="#6e6e6e" stroke="#e2e2e2" stroke-width="1.2"/><path d="M1 1.2h5.2l1 1.6h-6.2z" fill="#e2e2e2"/><path d="M2.6 5.4h9.3M2.6 7.5h9.3M2.6 9.6h9.3M2.6 11.7h9.3" stroke="#c8c8c8" stroke-width="1"/></svg>
<div class="a" style="left:754.4px;top:240.1px;width:107px;height:1px;background:#424242;"></div>
<div class="a" style="left:758.8px;top:245px;width:11.6px;height:11.6px;background:#4a4a4a;border:1px solid #404040;border-right-color:#5c5c5c;border-bottom-color:#5c5c5c;"></div>
<div class="t " style="left:808.4px;top:243.48px;font-size:11.3px;line-height:16px;color:#e8e8e8;"><span class="k" style="letter-spacing:-0.3px;">粘贴路径</span></div>
<svg class="a" style="left:783px;top:243.5px;" width="14.5" height="14.6" viewBox="0 0 14.5 14.6"><path d="M1 1.2h5.2l1 1.6h6.3v11H1z" fill="#6e6e6e" stroke="#e2e2e2" stroke-width="1.2"/><path d="M1 1.2h5.2l1 1.6h-6.2z" fill="#e2e2e2"/><path d="M2.6 5.4h9.3M2.6 7.5h9.3M2.6 9.6h9.3M2.6 11.7h9.3" stroke="#c8c8c8" stroke-width="1"/></svg>
<div class="a" style="left:754.4px;top:261.3px;width:107px;height:1px;background:#424242;"></div>
<div class="a" style="left:758.8px;top:266.2px;width:11.6px;height:11.6px;background:#5b7493;border:1px solid #4a6180;border-right-color:#7088a6;border-bottom-color:#7088a6;"></div>
<div class="t " style="left:808.4px;top:264.68px;font-size:11.3px;line-height:16px;color:#e8e8e8;"><span class="k" style="letter-spacing:-0.3px;">变换路径</span></div>
<svg class="a" style="left:783px;top:264.7px;" width="14.5" height="14.6" viewBox="0 0 14.5 14.6"><path d="M1 1.2h5.2l1 1.6h6.3v11H1z" fill="#6e6e6e" stroke="#e2e2e2" stroke-width="1.2"/><path d="M1 1.2h5.2l1 1.6h-6.2z" fill="#e2e2e2"/><path d="M2.6 5.4h9.3M2.6 7.5h9.3M2.6 9.6h9.3M2.6 11.7h9.3" stroke="#c8c8c8" stroke-width="1"/></svg>
<div class="a" style="left:754.4px;top:282.2px;width:107px;height:1px;background:#424242;"></div>
<svg class="a" style="left:853.5px;top:288.5px;" width="9" height="9" viewBox="0 0 9 9"><path d="M4 0v9M0 4h9" stroke="#e6e6e6" stroke-width="2"/></svg>
<div class="a" style="left:754.4px;top:300.2px;width:107px;height:1.2px;background:#2e2e2e;"></div>
<div class="a" style="left:754.4px;top:301.4px;width:107px;height:5.8px;background:#4a4a4a;"></div>
<svg class="a" style="left:841.5px;top:302.8px;" width="22" height="3.2" viewBox="0 0 22 3.2"><rect x="0" y="0" width="1" height="3.2" fill="#2c2c2c"/><rect x="1.9" y="0" width="1" height="3.2" fill="#2c2c2c"/><rect x="3.8" y="0" width="1" height="3.2" fill="#2c2c2c"/><rect x="5.7" y="0" width="1" height="3.2" fill="#2c2c2c"/><rect x="7.6" y="0" width="1" height="3.2" fill="#2c2c2c"/><rect x="9.5" y="0" width="1" height="3.2" fill="#2c2c2c"/><rect x="11.4" y="0" width="1" height="3.2" fill="#2c2c2c"/><rect x="13.3" y="0" width="1" height="3.2" fill="#2c2c2c"/><rect x="15.2" y="0" width="1" height="3.2" fill="#2c2c2c"/><rect x="17.1" y="0" width="1" height="3.2" fill="#2c2c2c"/><rect x="19" y="0" width="1" height="3.2" fill="#2c2c2c"/><rect x="20.9" y="0" width="1" height="3.2" fill="#2c2c2c"/></svg>
<div class="a" style="left:746.4px;top:307.3px;width:115px;height:1px;background:#464646;"></div>
<div class="a" style="left:753px;top:309.5px;width:24.4px;height:16.6px;background:#7b7b7b;border:1px solid #c4c4c4;"></div>
<div class="a" style="left:770.3px;top:320.4px;width:5.8px;height:4.8px;background:#dcdcdc;"></div>
<svg class="a" style="left:771px;top:321.6px;" width="4.4" height="2.7" viewBox="0 0 4.4 2.7"><path d="M0 0h4.4L2.2 2.7z" fill="#1e1e1e"/></svg>
<div class="a" style="left:784.2px;top:309.6px;width:25.1px;height:16.4px;background:#ffffff;border:1px solid #c8c8c8;"></div><svg class="a" style="left:784.2px;top:309.6px;" width="24.8" height="16.4" viewBox="0 0 24.8 15"><rect x="6.4" y="5.6" width="13.6" height="3.5" fill="#3c3c3c"/><path d="M15.7 5.2L19.9 2.3" stroke="#ee1c24" stroke-width="2"/><path d="M6.5 12.8L10.7 10" stroke="#ee1c24" stroke-width="2"/><rect x="18.6" y="9.8" width="5.4" height="4.4" fill="#e8e8e8"/><path d="M19 10.6h4.6L21.3 13.6z" fill="#333"/></svg>
<div class="a" style="left:815px;top:309.2px;width:52px;height:17.4px;background:#353535;border:1px solid #2b2b2b;border-radius:1px;"></div>
<div class="t " style="left:818px;top:312.08px;font-size:11.3px;line-height:16px;color:#dedede;"><span style="letter-spacing:-1px;position:relative;top:-0.9px;">3 </span><span class="k">点</span></div>
<div class="a" style="left:752.4px;top:336.8px;width:57px;height:17px;background:linear-gradient(#616161,#505050);border:1px solid #2f2f2f;border-radius:3px;box-shadow:inset 0 1px 0 #727272;"></div>
<div class="a" style="left:759.8px;top:351px;width:11px;height:1px;background:#777;"></div>
<svg class="a" style="left:759.5px;top:338.8px;" width="11.6" height="11.6" viewBox="0 0 11.6 11.6"><rect x="1.5" y="1.5" width="9" height="9" fill="#686868" stroke="#1e1e1e" stroke-width="1.2"/><g fill="#1e1e1e"><rect x="0" y="0" width="3" height="3"/><rect x="9" y="0" width="3" height="3"/><rect x="0" y="9" width="3" height="3"/><rect x="9" y="9" width="3" height="3"/></g></svg>
<svg class="a" style="left:800.1px;top:341.6px;" width="5" height="8.4" viewBox="0 0 5 8.4"><path d="M0 3.2L2.5 0l2.5 3.2zM0 5.2h5L2.5 8.4z" fill="#e6e6e6"/></svg>
<div class="a" style="left:815.2px;top:336.8px;width:52px;height:17px;background:linear-gradient(#616161,#505050);border:1px solid #2f2f2f;border-radius:3px;box-shadow:inset 0 1px 0 #727272;"></div>
<svg class="a" style="left:825.8px;top:338.9px;" width="10" height="12" viewBox="0 0 10 12"><path d="M2.5 0v12" stroke="#111" stroke-width="1.3"/><rect x="3.4" y="1" width="6" height="3.8" fill="#e6e6e6"/><rect x="3.4" y="7" width="6" height="3.8" fill="#e6e6e6"/><circle cx="2.5" cy="6" r="1.7" fill="#111"/></svg>
<svg class="a" style="left:751.3px;top:362.6px;" width="8.2" height="6.2" viewBox="0 0 8.2 6.2"><path d="M0 0h8.2L4.1 6.2z" fill="#ececec"/></svg>
<div class="t " style="left:765.5px;top:358.98px;font-size:11.3px;line-height:16px;color:#ececec;"><span class="k" style="letter-spacing:-0.26px;">路径操作</span></div>
<div class="a" style="left:822px;top:364px;width:39px;height:1px;background:#676767;"></div>
<div class="a" style="left:792px;top:376px;width:76px;height:19.6px;background:#5a5a5a;border:1px solid #2c2c2c;border-radius:3px;background:linear-gradient(#646464,#545454);"></div>
<div class="a" style="left:793px;top:377px;width:30px;height:17.6px;background:#3a3a3a;border-radius:2px 0 0 2px;"></div>
<div class="a" style="left:823px;top:377px;width:1px;height:17.6px;background:#2c2c2c;"></div>
<div class="a" style="left:853px;top:377px;width:1px;height:17.6px;background:#2c2c2c;"></div>
<svg class="a" style="left:801px;top:379.5px;" width="13" height="13" viewBox="0 0 13 13"><rect x="0.5" y="0.5" width="8.2" height="8.2" fill="#7b7b7b" stroke="#b9b9b9" stroke-width="1"/><rect x="4.2" y="4.2" width="8.2" height="8.2" fill="#8f8f8f" stroke="#cdcdcd" stroke-width="1"/></svg>
<svg class="a" style="left:832px;top:379.5px;" width="13" height="13" viewBox="0 0 13 13"><rect x="0.5" y="0.5" width="8.2" height="8.2" fill="#9a9a9a" stroke="#d6d6d6" stroke-width="1"/><rect x="4.2" y="4.2" width="8.2" height="8.2" fill="#5c5c5c" stroke="#a8a8a8" stroke-width="1"/></svg>
<div class="a" style="left:746.4px;top:492px;width:115px;height:1px;background:#3a3a3a;"></div>
<div class="a" style="left:746.4px;top:493px;width:115px;height:5.6px;background:#4d4d4d;"></div>
<svg class="a" style="left:625px;top:110px;" width="145" height="35" viewBox="0 0 145 35"><path d="M6.7 16L30 6l-0.8 6.3L137.8 25.3 28.1 22l-0.4 5.7z" fill="#ff0000"/></svg>
<div class="a" style="left:469.3px;top:67px;width:151px;height:130.3px;background:#f1f1f1;border:1px solid #9a9a9a;box-shadow:2.5px 2.5px 4px rgba(0,0,0,.5);"></div>
<div class="a" style="left:471.3px;top:108.9px;width:146.2px;height:19px;background:#3399ff;"></div>
<div class="a" style="left:472px;top:170px;width:145.5px;height:1px;background:#a5a5a5;"></div>
<div class="t " style="left:504px;top:71.88px;font-size:11.3px;line-height:16px;color:#9a9a9a;"><span class="k" style="letter-spacing:-0.16px;">新建图层</span></div>
<div class="t " style="left:504px;top:91.88px;font-size:11.3px;line-height:16px;color:#1a1a1a;"><span class="k" style="letter-spacing:-0.16px;">合并形状</span></div>
<div class="t " style="left:504px;top:111.48px;font-size:11.3px;line-height:16px;color:#ffffff;"><span class="k" style="letter-spacing:-0.16px;">减去顶层形状</span></div>
<div class="t " style="left:504px;top:131.38px;font-size:11.3px;line-height:16px;color:#1a1a1a;"><span class="k" style="letter-spacing:-0.16px;">与形状区域相交</span></div>
<div class="t " style="left:504px;top:150.68px;font-size:11.3px;line-height:16px;color:#1a1a1a;"><span class="k" style="letter-spacing:-0.16px;">排除重叠形状</span></div>
<div class="t " style="left:504px;top:178.48px;font-size:11.3px;line-height:16px;color:#1a1a1a;"><span class="k" style="letter-spacing:-0.16px;">合并形状组件</span></div>
<svg class="a" style="left:490px;top:73px;" width="9.5" height="9.8" viewBox="0 0 9.5 9.8"><defs><linearGradient id="gn" x1="0" y1="0" x2="0" y2="1"><stop offset="0" stop-color="#e6e6e6"/><stop offset="1" stop-color="#cfcfcf"/></linearGradient></defs><rect x="0.5" y="0.5" width="8.3" height="8.7" fill="url(#gn)" stroke="#acacac" stroke-width="1"/></svg>
<svg class="a" style="left:474px;top:94.6px;" width="9.5" height="9" viewBox="0 0 9.5 9"><path d="M0.9 4.6L3.3 7.2 7.6 1.3" fill="none" stroke="#0c0c0c" stroke-width="1.9"/></svg>
<svg class="a" style="left:488px;top:92.8px;" width="12" height="12" viewBox="0 0 12 12"><defs><linearGradient id="gg" x1="0" y1="0" x2="0" y2="1"><stop offset="0" stop-color="#cdcdcd"/><stop offset="1" stop-color="#959595"/></linearGradient></defs><rect x="0.8" y="0.9" width="7.4" height="7.2" fill="url(#gg)" stroke="#2a2a2a" stroke-width="1.1"/><rect x="3.9" y="3.8" width="7.5" height="7.4" fill="url(#gg)" stroke="#2a2a2a" stroke-width="1.1"/></svg>
<svg class="a" style="left:487.5px;top:111.8px;" width="13.5" height="14" viewBox="0 0 13.5 14"><defs><linearGradient id="gb" x1="0" y1="0" x2="0" y2="1"><stop offset="0" stop-color="#5b93d6"/><stop offset="1" stop-color="#2a62a6"/></linearGradient></defs><rect x="1.1" y="1.1" width="7.4" height="7.2" rx="0.8" fill="url(#gb)" stroke="#0e2a4c" stroke-width="1.3"/><rect x="4" y="3.8" width="8" height="8" fill="#3399ff" stroke="#17365e" stroke-width="1"/><path d="M4 12.9h8" stroke="#7dbcff" stroke-width="0.7"/></svg>
<svg class="a" style="left:488px;top:132.3px;" width="12" height="12" viewBox="0 0 12 12"><rect x="0.6" y="0.6" width="7.4" height="7.4" fill="#f6f6f6" stroke="#8a8a8a" stroke-width="1"/><rect x="3.8" y="3.8" width="7.4" height="7.4" fill="none" stroke="#8a8a8a" stroke-width="1"/><rect x="3.8" y="3.8" width="4.2" height="4.2" fill="#777" stroke="#222" stroke-width="1"/></svg>
<svg class="a" style="left:488px;top:151.5px;" width="12" height="12" viewBox="0 0 12 12"><rect x="0.8" y="0.8" width="7.3" height="7.3" fill="url(#gg)" stroke="#2a2a2a" stroke-width="1.2"/><rect x="3.9" y="3.9" width="7.4" height="7.4" fill="url(#gg)" stroke="#2a2a2a" stroke-width="1.2"/><rect x="4.5" y="4.5" width="3" height="3" fill="#ffffff"/></svg>
<svg class="a" style="left:488px;top:179.3px;" width="12" height="12" viewBox="0 0 12 12"><path d="M0.7 0.7h6.6v3.4h4v7h-6.8v-3.6h-3.8z" fill="url(#gg)" stroke="#2a2a2a" stroke-width="1.2"/><path d="M3.8 4.2l3.6 3.6M7.6 5.4v2.6h-2.6" fill="none" stroke="#222" stroke-width="1.1"/></svg>
</body></html>
